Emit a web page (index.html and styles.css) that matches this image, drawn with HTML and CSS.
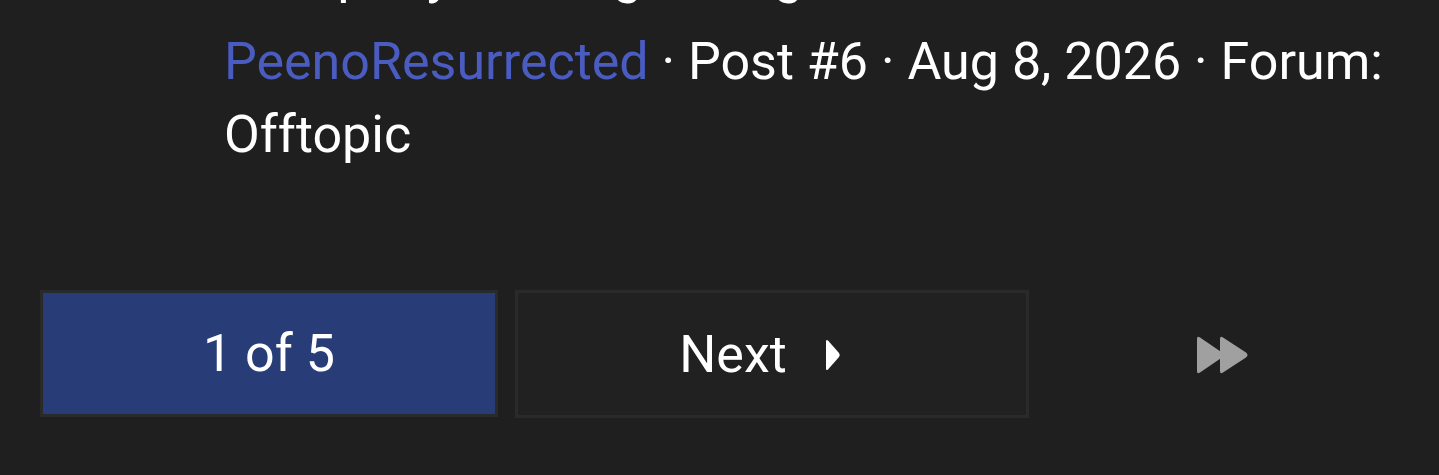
FILE: index.html
```html
<!DOCTYPE html>
<html>
<head>
<meta charset="utf-8">
<link rel="stylesheet" href="styles.css">
</head>
<body>
<div class="page">
  <div class="post">
    <div class="title">Company making changes</div>
    <div class="meta"><a class="author" href="#">PeenoResurrected</a> · Post #6 · Aug 8, 2026 · Forum: Offtopic</div>
  </div>
  <nav class="pager">
    <div class="btn current">1 of 5</div>
    <a class="btn next" href="#">Next
      <svg class="tri" width="18" height="34" viewBox="0 0 18 34"><path d="M3 3.5 Q3 1 5 2.6 L16 15 Q17.6 17 16 19 L5 31.4 Q3 33 3 30.5 Z" fill="#ffffff"/></svg>
    </a>
    <a class="last" href="#">
      <svg width="56" height="40" viewBox="0 0 56 40"><path d="M2 4 Q2 0.5 5 2.5 L27 17.5 Q30 20 27 22.5 L5 37.5 Q2 39.5 2 36 Z" fill="#a0a0a0"/><path d="M25 4 Q25 0.5 28 2.5 L51 17.5 Q54 20 51 22.5 L28 37.5 Q25 39.5 25 36 Z" fill="#a0a0a0"/></svg>
    </a>
  </nav>
</div>
</body>
</html>
```

FILE: styles.css
```css
html, body {
  margin: 0;
  padding: 0;
  background: #1f1f1f;
  height: 100%;
  overflow: hidden;
}
.page {
  font-family: Roboto, "Noto Sans", sans-serif;
  color: #ffffff;
}
.post {
  padding-left: 224px;
  padding-right: 40px;
}
.title {
  font-size: 54px;
  line-height: 64px;
  margin-top: -58px;
  margin-bottom: 19px;
  white-space: nowrap;
}
.meta {
  font-size: 52px;
  line-height: 73px;
}
.author {
  color: #4a5cc0;
  text-decoration: none;
}
.pager {
  display: flex;
  gap: 17px;
  margin: 119px 40px 0 40px;
  height: 128px;
}
.btn {
  box-sizing: border-box;
  height: 128px;
  border: 3px solid #2a2a2a;
  display: flex;
  align-items: center;
  justify-content: center;
  font-size: 52px;
  color: #ffffff;
  text-decoration: none;
}
.current {
  width: 458px;
  background: #283c77;
  height: 127px;
}
.next {
  width: 514px;
  background: #212121;
  gap: 36px;
  padding-right: 24px;
}
.tri {
  display: block;
  margin-top: 2px;
}
.last {
  flex: 1;
  display: flex;
  align-items: center;
  justify-content: center;
}
.last svg {
  display: block;
  margin-top: 1px;
}
```
